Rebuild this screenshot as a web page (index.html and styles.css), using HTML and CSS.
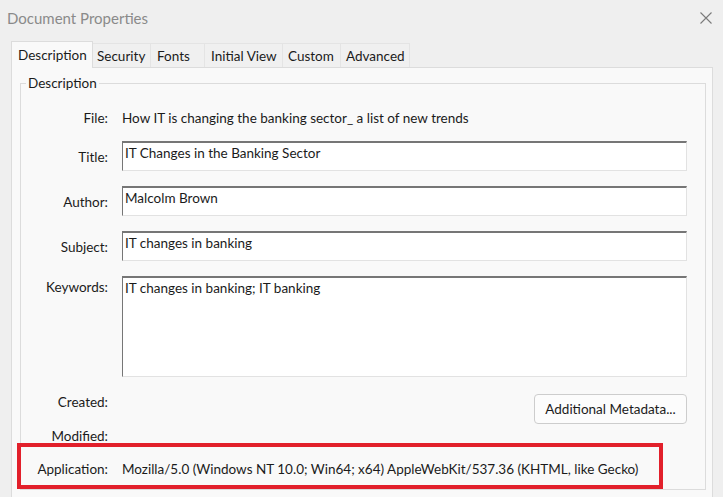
FILE: index.html
```html
<!DOCTYPE html>
<html lang="en">
<head>
<meta charset="utf-8">
<title>Document Properties</title>
<link rel="stylesheet" href="styles.css">
</head>
<body>
<div class="dialog">
  <header class="titlebar">
    <span class="title">Document Properties</span>
    <svg class="close" width="12" height="12" viewBox="0 0 12 12" aria-hidden="true">
      <path d="M0.5 0.5 L11.5 11.5 M11.5 0.5 L0.5 11.5" stroke="#7a7a7a" stroke-width="1.1" fill="none"/>
    </svg>
  </header>

  <nav class="tabs">
    <div class="tab tab-desc active">Description</div>
    <div class="tab tab-sec">Security</div>
    <div class="tab tab-fonts">Fonts</div>
    <div class="tab tab-iv">Initial View</div>
    <div class="tab tab-custom">Custom</div>
    <div class="tab tab-adv">Advanced</div>
  </nav>

  <section class="panel">
    <fieldset class="group">
      <legend>Description</legend>
      <div class="form">
        <div class="row row-file">
          <span class="label">File:</span>
          <span class="value">How IT is changing the banking sector_ a list of new trends</span>
        </div>
        <div class="row row-input">
          <span class="label">Title:</span>
          <div class="input">IT Changes in the Banking Sector</div>
        </div>
        <div class="row row-input">
          <span class="label">Author:</span>
          <div class="input">Malcolm Brown</div>
        </div>
        <div class="row row-input">
          <span class="label">Subject:</span>
          <div class="input">IT changes in banking</div>
        </div>
        <div class="row row-top">
          <span class="label label-kw">Keywords:</span>
          <div class="input input-area">IT changes in banking; IT banking</div>
        </div>
        <div class="row row-meta">
          <span class="label">Created:</span>
          <div class="meta-cell"><button class="btn">Additional Metadata...</button></div>
        </div>
        <div class="row row-line">
          <span class="label">Modified:</span>
          <span class="value"></span>
        </div>
        <div class="row row-line">
          <span class="label">Application:</span>
          <span class="value">Mozilla/5.0 (Windows NT 10.0; Win64; x64) AppleWebKit/537.36 (KHTML, like Gecko)</span>
        </div>
      </div>
    </fieldset>
    <div class="highlight"></div>
  </section>
</div>
</body>
</html>
```

FILE: styles.css
```css
* { box-sizing: border-box; }

html, body {
  margin: 0;
  padding: 0;
}

body {
  width: 723px;
  height: 497px;
  overflow: hidden;
  background: #efefef;
  font-family: "Lato", "Liberation Sans", sans-serif;
  font-size: 13.5px;
  color: #1b1b1b;
}

.dialog {
  display: flex;
  flex-direction: column;
  height: 497px;
}

.titlebar {
  height: 42px;
  display: flex;
  align-items: flex-start;
  justify-content: space-between;
  padding: 8px 11px 0 7px;
}

.title {
  font-size: 15px;
  color: #8a8a8a;
  line-height: 20px;
}

.close {
  margin-top: 4px;
}

.tabs {
  display: flex;
  align-items: flex-end;
  margin-left: 11px;
  height: 25px;
  position: relative;
  z-index: 1;
}

.tab {
  height: 24px;
  line-height: 25px;
  padding: 0 0 0 4px;
  background: #f0f0f0;
  border: 1px solid #e4e4e4;
  border-bottom: none;
  border-left: none;
  white-space: nowrap;
}

.tab.active {
  height: 27px;
  margin-bottom: -1px;
  line-height: 26px;
  background: #f9f9f9;
  border: 1px solid #dcdcdc;
  border-bottom: none;
  padding-left: 6px;
}

.tab-desc { width: 82px; }
.tab-sec { width: 58px; }
.tab-fonts { width: 54px; padding-left: 6px; }
.tab-iv { width: 78px; padding-left: 6px; }
.tab-custom { width: 58px; padding-left: 5px; }
.tab-adv { width: 69px; padding-left: 5px; }

.panel {
  position: relative;
  flex: 1;
  margin: 0 10px 0 11px;
  background: #f9f9f9;
  border: 1px solid #dcdcdc;
  border-bottom: none;
  padding: 6px 6px 0 8px;
}

.group {
  margin: 0;
  padding: 0 17px 0 0;
  border: 1px solid #dcdcdc;
  height: 416px;
}

.group legend {
  margin-left: 5px;
  padding: 0 2px;
  line-height: 18px;
  font-size: 13.5px;
}

.form {
  display: flex;
  flex-direction: column;
  padding-top: 15px;
}

.row {
  display: flex;
  align-items: center;
  gap: 14px;
}

.label {
  width: 87px;
  flex: none;
  text-align: right;
}

.row-file {
  height: 22px;
  margin-bottom: 12px;
}

.row-input {
  margin-bottom: 15px;
}

.row-input .label {
  padding-top: 2px;
}

.value {
  white-space: nowrap;
}

.input {
  width: 565px;
  height: 30px;
  background: #ffffff;
  border-top: 2px solid #767676;
  border-left: 1px solid #767676;
  border-right: 1px solid #e2e2e2;
  border-bottom: 1px solid #e2e2e2;
  padding: 1px 2px 0;
  line-height: 18px;
  white-space: nowrap;
}

.row-top {
  align-items: flex-start;
}

.label-kw {
  margin-top: 2px;
  line-height: 18px;
}

.input-area {
  height: 101px;
}

.row-meta {
  height: 33px;
  margin-top: 9px;
  align-items: flex-start;
}

.row-meta .label {
  line-height: 33px;
}

.meta-cell {
  width: 565px;
  display: flex;
  justify-content: flex-end;
}

.btn {
  margin-top: 8px;
  height: 30px;
  width: 153px;
  font-family: inherit;
  font-size: 13.5px;
  color: #1b1b1b;
  background: #fcfcfc;
  border: 1px solid #cdcdcd;
  border-radius: 4px;
  padding: 0;
}

.row-line {
  height: 33px;
}

.highlight {
  position: absolute;
  left: 5px;
  top: 375px;
  width: 646px;
  height: 46px;
  border: 4px solid #e2202b;
  pointer-events: none;
}
```
